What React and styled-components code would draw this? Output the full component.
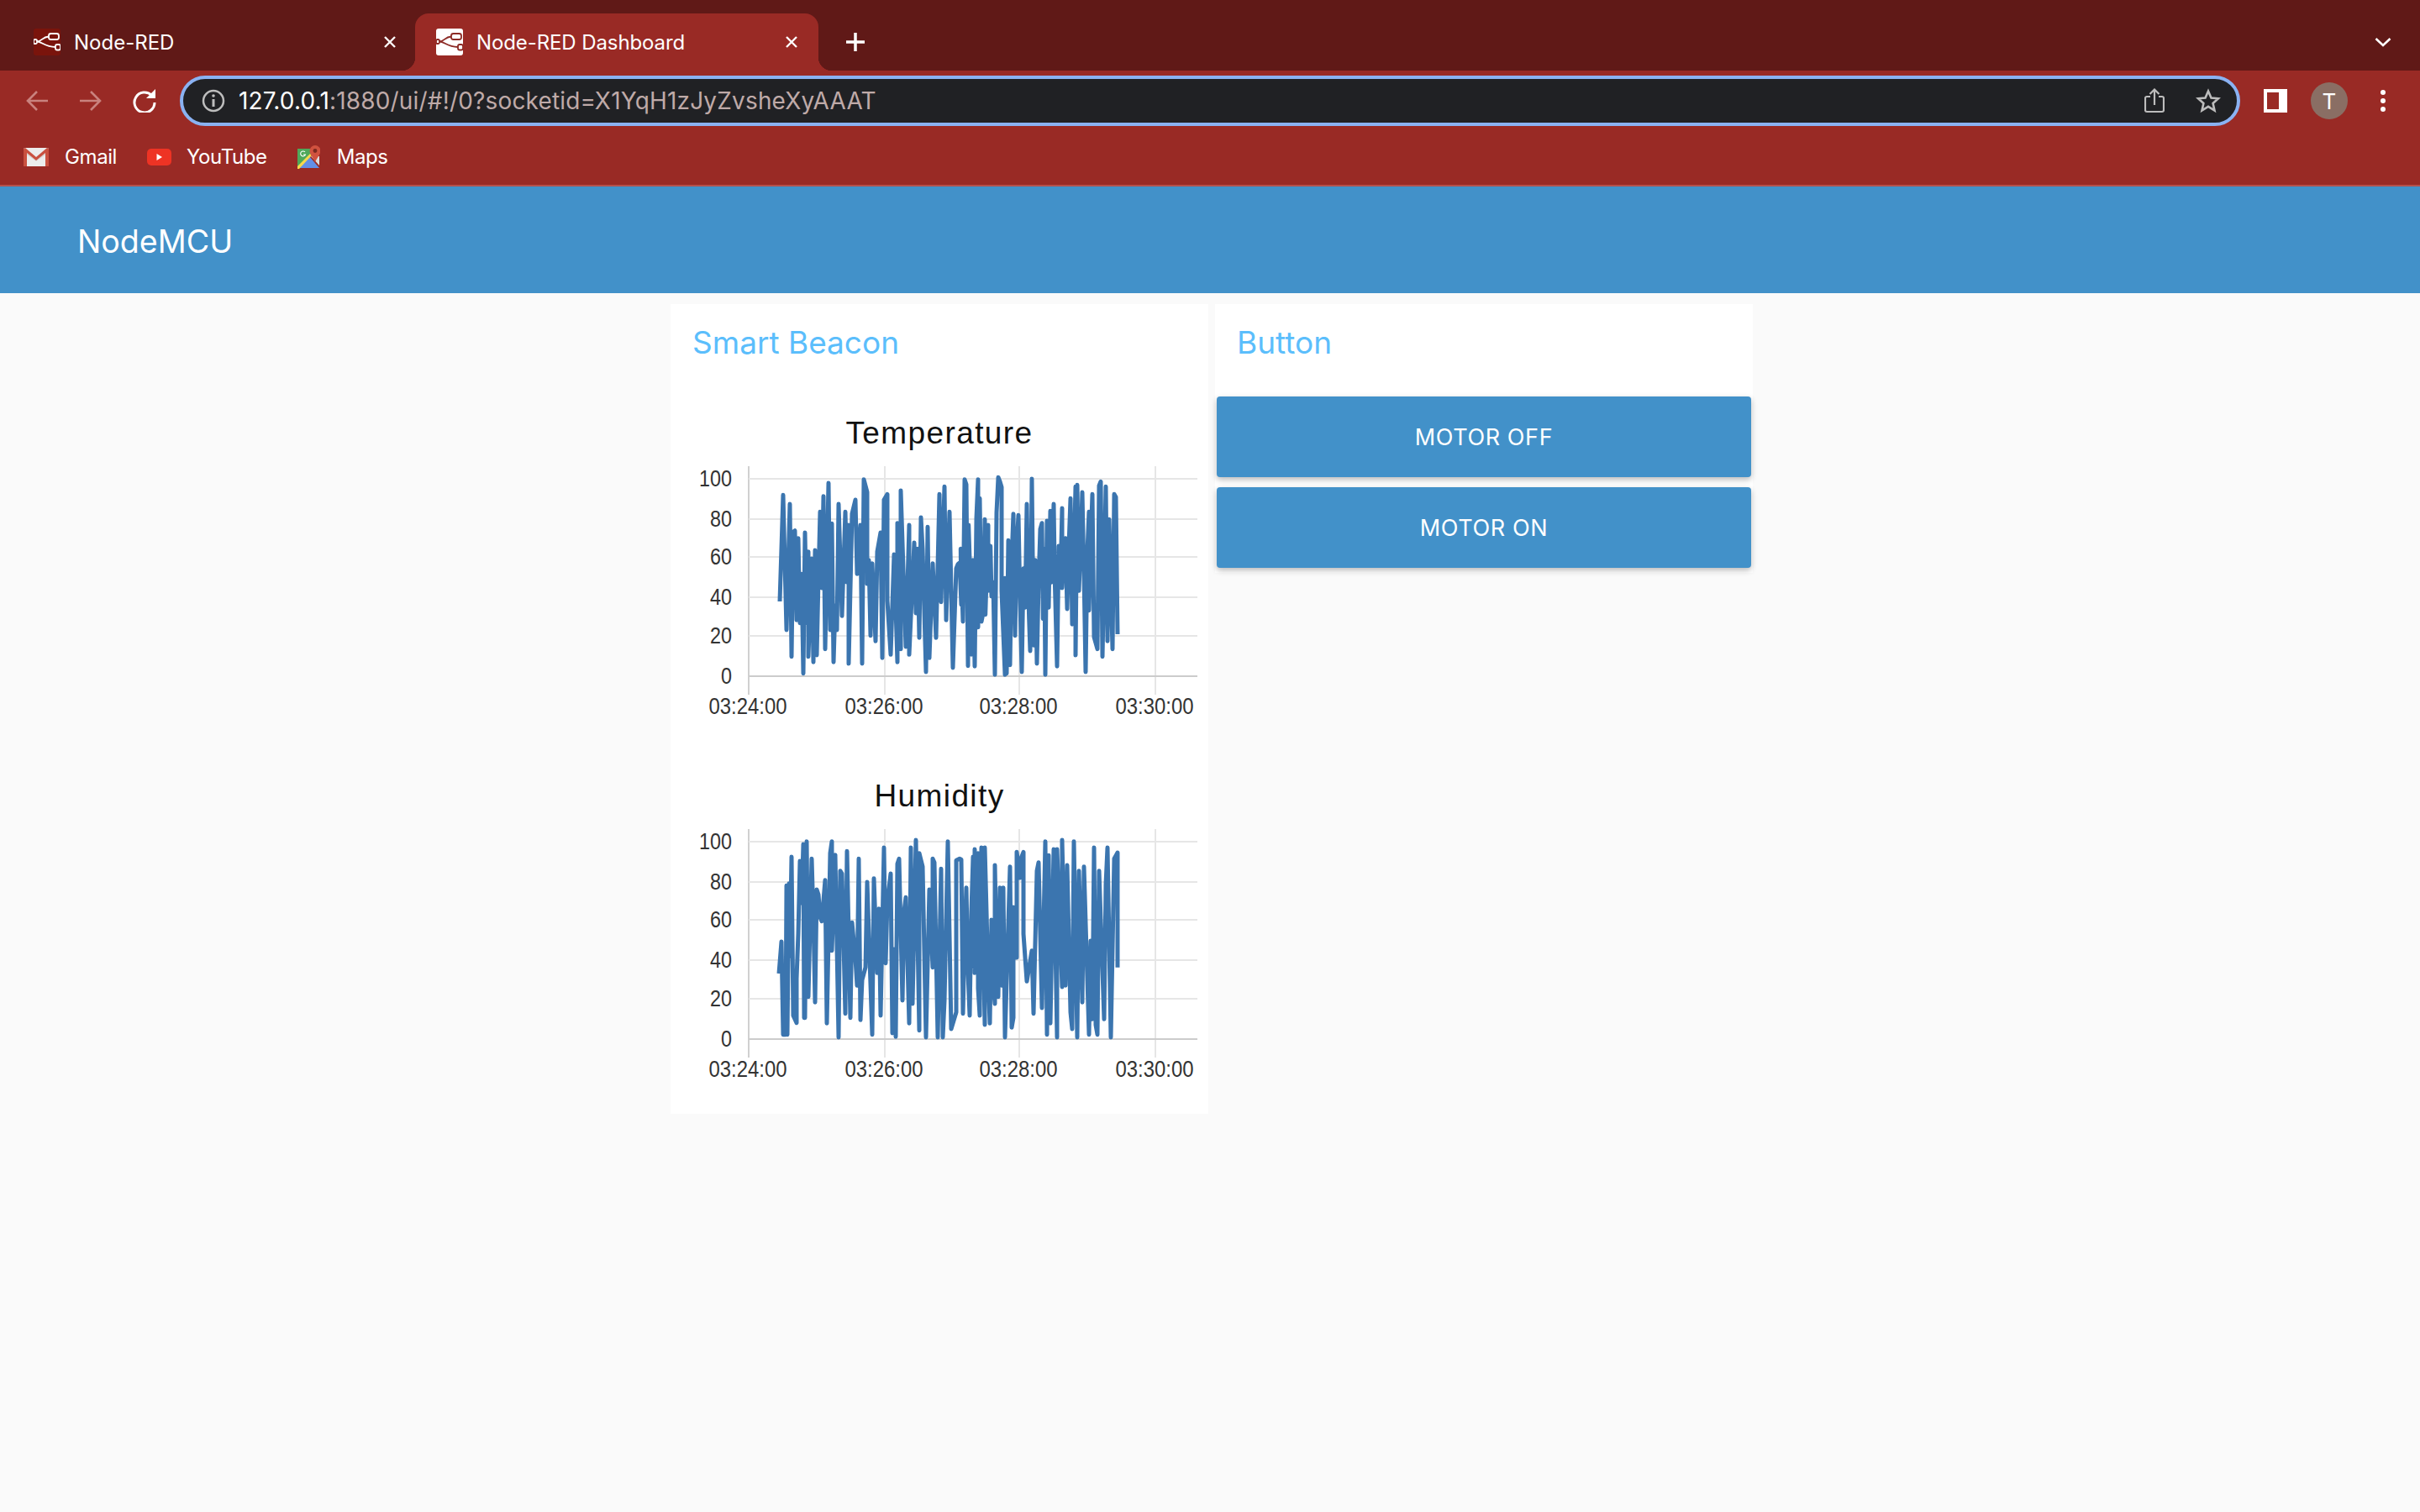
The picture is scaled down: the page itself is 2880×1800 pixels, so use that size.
import React from 'react'
import styled, { createGlobalStyle } from 'styled-components'

const GlobalStyle = createGlobalStyle`
  html, body {
    margin: 0;
    padding: 0;
    background: #fafafa;
  }
  * {
    box-sizing: border-box;
  }
`

const Page = styled.div`
  width: 2880px;
  height: 1800px;
  display: flex;
  flex-direction: column;
  background: #fafafa;
  overflow: hidden;
`

/* browser chrome */
const TabStrip = styled.div`
  height: 84px;
  flex: none;
  padding: 16px 34px 0 14px;
  display: flex;
  align-items: stretch;
  background: #601917;
`
const Tab = styled.div`
  position: relative;
  width: 480px;
  padding: 0 ${p => (p.$active ? 20 : 18)}px 0 ${p => (p.$active ? 25 : 26)}px;
  display: flex;
  align-items: center;
  border-radius: 16px 16px 0 0;
  background: ${p => (p.$active ? '#992a25' : 'transparent')};
  ${p => p.$active && `
    &::before, &::after {
      content: '';
      position: absolute;
      bottom: 0;
      width: 16px;
      height: 16px;
    }
    &::before {
      left: -16px;
      background: radial-gradient(circle at 0 0, transparent 16px, #992a25 16.5px);
    }
    &::after {
      right: -16px;
      background: radial-gradient(circle at 100% 0, transparent 16px, #992a25 16.5px);
    }
  `}
`
const TabTitle = styled.span`
  margin-left: 16px;
  font: 400 24px "Inter", sans-serif;
  letter-spacing: ${p => (p.$active ? '-0.1px' : '0')};
  color: #fff;
  white-space: nowrap;
`
const TabClose = styled.span`
  margin-left: auto;
  width: 24px;
  height: 24px;
  display: flex;
  align-items: center;
  justify-content: center;
`
const NewTab = styled.span`
  margin-left: 32px;
  width: 24px;
  display: flex;
  align-items: center;
  justify-content: center;
`
const TabMenu = styled.span`
  margin-left: auto;
  width: 20px;
  display: flex;
  align-items: center;
  justify-content: center;
`
const Toolbar = styled.div`
  height: 66px;
  flex: none;
  padding: 6px 0 0 12px;
  display: flex;
  align-items: flex-start;
  background: #992a25;
`
const NavButton = styled.span`
  width: 64px;
  height: 60px;
  flex: none;
  display: flex;
  align-items: center;
  justify-content: center;
`
const Omnibox = styled.div`
  width: 2452px;
  height: 60px;
  margin-left: 10px;
  padding: 0 19px 0 22px;
  display: flex;
  align-items: center;
  border: 4px solid #8ab2f2;
  border-radius: 30px;
  background: #202124;
`
const UrlText = styled.div`
  margin-left: 16px;
  font: 400 28px "Inter", sans-serif;
  letter-spacing: 0.17px;
  color: #bfaaa8;
  white-space: nowrap;
`
const UrlHost = styled.span`
  color: #fff;
`
const OmniIcons = styled.div`
  margin-left: auto;
  display: flex;
  align-items: center;
  gap: 37px;
`
const ToolbarRight = styled.div`
  height: 60px;
  margin-left: 28px;
  display: flex;
  align-items: center;
`
const PanelIcon = styled.span`
  width: 28px;
  height: 28px;
  padding: 4px 10px 4px 4px;
  background: #fff;
`
const PanelInner = styled.span`
  display: block;
  width: 100%;
  height: 100%;
  background: #992a25;
`
const Avatar = styled.span`
  width: 44px;
  height: 44px;
  margin-left: 28px;
  border-radius: 50%;
  display: flex;
  align-items: center;
  justify-content: center;
  background: #8a6e64;
  font: 400 26px "Inter", sans-serif;
  color: #fff;
`
const Dots = styled.span`
  margin-left: 39px;
  display: flex;
  flex-direction: column;
  gap: 4px;
`
const Dot = styled.span`
  width: 6px;
  height: 6px;
  border-radius: 50%;
  background: #fff;
`
const Bookmarks = styled.div`
  height: 72px;
  flex: none;
  padding: 3px 0 0 28px;
  display: flex;
  align-items: center;
  background: #992a25;
  border-bottom: 2px solid #b5504c;
`
const Bookmark = styled.div`
  display: flex;
  align-items: center;
  gap: ${p => p.$gap}px;
  margin-right: ${p => p.$after}px;
  font: 400 24px "Inter", sans-serif;
  letter-spacing: -0.4px;
  color: #fff;
`

/* dashboard */
const TitleBar = styled.header`
  height: 127px;
  flex: none;
  padding: 4px 0 0 92px;
  display: flex;
  align-items: center;
  background: #4291c9;
  font: 400 37.6px "Inter", sans-serif;
  color: #fff;
`
const Content = styled.main`
  padding: 13px 0 0 4px;
  display: flex;
  justify-content: center;
  align-items: flex-start;
  gap: 8px;
`
const Card = styled.section`
  width: 640px;
  background: #fff;
`
const CardHeader = styled.h2`
  height: 110px;
  margin: 0;
  padding: 25px 0 0 26px;
  font: 400 37px/42px "Inter", sans-serif;
  color: #5bbefc;
`
const ChartList = styled.div`
  padding: 2px 0 10px;
  display: flex;
  flex-direction: column;
  gap: 22px;
`
const ChartBlock = styled.div`
  height: 410px;
`
const ChartTitle = styled.h3`
  height: 80px;
  margin: 0;
  padding-top: 21px;
  text-align: center;
  font: 400 37px/42px "Liberation Sans", sans-serif;
  letter-spacing: 1.4px;
  color: #111;
`
const ChartSvg = styled.svg`
  display: block;
`
const TickText = styled.text`
  font: 400 28px "Liberation Sans", sans-serif;
  fill: #333;
`
const ButtonList = styled.div`
  padding: 0 2px 6px;
  display: flex;
  flex-direction: column;
  gap: 12px;
`
const MotorButton = styled.button`
  height: 96px;
  border: 0;
  border-radius: 4px;
  background: #4291c9;
  box-shadow: 0 3px 7px rgba(0, 0, 0, 0.28);
  font: 400 27px "Inter", sans-serif;
  letter-spacing: 0.6px;
  color: #fff;
`

/* line traces, read off the picture: [x, y] pairs at 3x from a crop origin */
const tempA = [84,498,96,118,108,600,120,150,126,695,132,250,138,245,144,565,150,272,156,575,162,400,168,755,174,252,180,575,186,320,186,695,198,345,204,715,210,315,216,690,222,420,228,178,234,450,240,122,246,668,258,75,264,600,270,220,276,715,282,512,288,600,294,150,306,550,318,178,324,430,330,225,330,720,342,185,354,135,360,400,372,225,378,720,384,62,396,108,396,435,402,350,408,620,414,362,426,640,432,320,444,252,450,700,456,135,468,115,468,495,480,688,492,330,504,715,504,218,516,668,516,102,534,660,546,225,546,688,564,288,570,540,576,310,582,628,588,198,594,312,606,750,612,232,618,700,630,362,642,628,654,115,660,500,672,88,678,565,690,178,702,735,714,380]
const tempB = [30,365,36,360,42,510,40,310,48,570,54,62,60,80,66,728,68,225,72,350,78,688,84,350,90,730,96,200,102,62,102,590,108,130,114,570,120,540,126,205,128,545,138,225,138,460,146,300,150,480,156,430,162,760,168,180,174,55,180,70,186,90,186,460,198,760,198,415,204,755,210,280,216,725,222,350,228,185,234,620,240,300,246,190,252,500,258,750,264,380,270,520,276,150,280,400,284,560,288,675,292,300,294,60,298,420,300,655,306,350,312,720,318,430,324,240,330,218,334,560,338,310,342,760,348,210,354,520,360,175,364,430,372,150,376,420,384,730,390,300,396,430,402,165,402,450,408,300,414,272,420,525,426,300,432,130,438,580,444,340,450,88,450,690,456,82,462,460,468,300,474,108,480,400,486,750,492,320,498,178,498,530,504,300,510,115,516,625,528,668,534,85,540,70,546,695,558,88,564,640,570,205,582,668,588,115,594,125,600,615]
const humA = [36,522,45,408,51,740,60,740,63,208,66,740,72,200,75,460,81,105,87,672,99,698,99,540,105,380,111,120,117,270,123,60,126,680,129,680,135,50,141,605,153,112,159,320,165,625,171,222,177,240,183,320,189,335,201,188,207,700,219,92,225,50,225,440,237,98,249,750,255,155,261,165,273,665,279,85,291,680,297,340,309,470,315,565,321,112,327,688,333,545,345,500,351,195,360,470,369,740,375,182,387,520,393,290,399,672,411,72,417,485,423,265,435,165,441,735,447,435,453,748,459,130,465,112,477,618,483,298,489,250,501,700,507,72,513,630,525,45,537,725,537,92,549,140,561,750,573,222,585,500,585,112,591,125,603,750,615,148,621,750,627,620,639,50,651,720]
const humB = [24,660,24,118,36,112,42,115,48,665,54,400,60,215,66,520,72,672,78,300,84,105,88,500,90,78,90,520,96,300,102,92,102,575,108,672,110,250,114,72,120,400,126,705,126,72,132,300,138,540,144,700,150,330,156,560,162,630,162,135,168,450,174,605,180,215,186,565,192,215,198,750,216,140,222,715,228,680,228,285,240,465,240,88,252,180,252,120,264,88,264,380,276,550,294,440,300,665,312,155,318,125,330,645,342,50,348,740,354,100,360,700,372,78,384,750,384,78,402,570,402,45,414,565,420,135,432,660,438,720,444,50,456,750,462,155,474,625,480,140,498,740,504,405,510,685,516,72,522,705,528,740,534,155,552,685,558,205,564,72,576,750,588,112,600,90,600,500]

function tracePoints(trace, ox, oy) {
  const out = []
  for (let i = 0; i < trace.length; i += 2) {
    out.push(`${(ox + trace[i] / 3 - 798).toFixed(1)},${(oy + trace[i + 1] / 3).toFixed(1)}`)
  }
  return out
}

const yTicks = [
  { y: 16, label: '100', w: 39 },
  { y: 64, label: '80', w: 26 },
  { y: 109, label: '60', w: 26 },
  { y: 157, label: '40', w: 26 },
  { y: 203, label: '20', w: 26 },
  { y: 251, label: '0', w: 13 },
]
const xTicks = [
  { x: 92, label: '03:24:00' },
  { x: 254, label: '03:26:00' },
  { x: 414, label: '03:28:00' },
  { x: 576, label: '03:30:00' },
]
const gridX = [93, 255, 415, 577]

function LineChart({ points }) {
  return (
    <ChartSvg width="640" height="330" viewBox="0 0 640 330">
      {gridX.map((x, i) => (
        <line key={x} x1={x} x2={x} y1="1" y2="273" stroke={i === 0 ? '#d0d0d0' : '#e6e6e6'} strokeWidth="2" />
      ))}
      {yTicks.map(t => (
        <line key={t.y} x1="93" x2="627" y1={t.y} y2={t.y} stroke={t.y === 251 ? '#cccccc' : '#e6e6e6'} strokeWidth="2" />
      ))}
      <polyline points={points.join(' ')} fill="none" stroke="#3b75af" strokeWidth="5" strokeLinejoin="round" strokeLinecap="butt" />
      {yTicks.map(t => (
        <TickText key={t.y} x="73" y={t.y - 1} textAnchor="end" dominantBaseline="central" textLength={t.w} lengthAdjust="spacingAndGlyphs">{t.label}</TickText>
      ))}
      {xTicks.map(t => (
        <TickText key={t.x} x={t.x} y="286" textAnchor="middle" dominantBaseline="central" textLength="93" lengthAdjust="spacingAndGlyphs">{t.label}</TickText>
      ))}
    </ChartSvg>
  )
}

function NodeRedIcon({ dark }) {
  const bg = dark ? '#7a140c' : '#fff'
  const fg = dark ? '#fff' : '#8c2a25'
  return (
    <svg width="32" height="32" viewBox="0 0 32 32">
      <rect width="32" height="32" rx="3" fill={bg} />
      <rect x="18" y="6" width="12" height="7" rx="2.5" fill="none" stroke={fg} strokeWidth="1.8" />
      <rect x="26" y="19" width="6" height="6.5" rx="2" fill="none" stroke={fg} strokeWidth="1.8" />
      <rect x="0" y="13" width="4" height="5" rx="1.5" fill="none" stroke={fg} strokeWidth="1.8" />
      <path d="M4 15.5c6 0 6-5.500 14-6M4 15.500c6 0 9 6.500 22 6.500" fill="none" stroke={fg} strokeWidth="1.8" />
    </svg>
  )
}

function CloseIcon() {
  return (
    <svg width="16" height="16" viewBox="0 0 16 16">
      <path d="M2 2l12 12M14 2L2 14" stroke="#fff" strokeWidth="2.400" fill="none" />
    </svg>
  )
}

function GmailIcon() {
  return (
    <svg width="30" height="22" viewBox="0 0 30 22">
      <rect width="30" height="22" rx="2" fill="#ececec" />
      <path d="M1 1l14 11L29 1v5L15 16 1 6z" fill="#d9d3d0" />
      <path d="M0 2c0-1 1-2 2-2l13 11L28 0c1 0 2 1 2 2v20h-4V6L15 15 4 6v16H0z" fill="#c9503f" />
    </svg>
  )
}

function YoutubeIcon() {
  return (
    <svg width="29" height="20" viewBox="0 0 29 20">
      <rect width="29" height="20" rx="5" fill="#ee3324" />
      <path d="M11.500 6v8l6.500-4z" fill="#fff" />
    </svg>
  )
}

function MapsIcon() {
  return (
    <svg width="27" height="28" viewBox="0 0 27 28">
      <path d="M0 4h16v8L0 27z" fill="#4fa85a" />
      <path d="M0 27l14-14 12 14z" fill="#628fe8" />
      <path d="M0 25L15 10l2 2L2 28H0z" fill="#f6d94c" />
      <path d="M16 13l10 11V13z" fill="#dcdcdc" />
      <path d="M21 0a6.500 6.500 0 0 1 6.500 6.500C27.500 11 23 15 21 20c-2-5-6.500-9-6.500-13.500A6.500 6.500 0 0 1 21 0z" fill="#d0523f" />
      <circle cx="21" cy="6.500" r="2.400" fill="#7a2a20" />
      <path d="M9 8a3 3 0 1 0 .5 3H7" fill="none" stroke="#fff" strokeWidth="1.100" />
    </svg>
  )
}

function App() {
  const temperature = [...tracePoints(tempA, 900, -4), ...tracePoints(tempB, 1130, -4)]
  const humidity = [...tracePoints(humA, 915, -1), ...tracePoints(humB, 1130, -1)]

  return (
    <Page>
      <GlobalStyle />
      <TabStrip>
        <Tab>
          <NodeRedIcon dark />
          <TabTitle>Node-RED</TabTitle>
          <TabClose><CloseIcon /></TabClose>
        </Tab>
        <Tab $active>
          <NodeRedIcon />
          <TabTitle $active>Node-RED Dashboard</TabTitle>
          <TabClose><CloseIcon /></TabClose>
        </Tab>
        <NewTab>
          <svg width="24" height="24" viewBox="0 0 24 24">
            <path d="M12 1v22M1 12h22" stroke="#fff" strokeWidth="3.500" fill="none" />
          </svg>
        </NewTab>
        <TabMenu>
          <svg width="20" height="12" viewBox="0 0 20 12">
            <path d="M1.500 2L10 10l8.500-8" stroke="#fff" strokeWidth="2.600" fill="none" />
          </svg>
        </TabMenu>
      </TabStrip>

      <Toolbar>
        <NavButton>
          <svg width="28" height="26" viewBox="0 0 28 26">
            <path d="M27 13H3M14 2L3 13l11 11" stroke="#c9827e" strokeWidth="2.600" fill="none" />
          </svg>
        </NavButton>
        <NavButton>
          <svg width="28" height="26" viewBox="0 0 28 26">
            <path d="M1 13h24M14 2l11 11-11 11" stroke="#c9827e" strokeWidth="2.600" fill="none" />
          </svg>
        </NavButton>
        <NavButton>
          <svg width="28" height="28" viewBox="0 0 28 28">
            <path d="M22.500 7.500A12 12 0 1 0 26 16" stroke="#fff" strokeWidth="3" fill="none" />
            <path d="M27 0v11H16z" fill="#fff" />
          </svg>
        </NavButton>
        <Omnibox>
          <svg width="28" height="28" viewBox="0 0 28 28">
            <circle cx="14" cy="14" r="12" stroke="#bdbdbd" strokeWidth="2.500" fill="none" />
            <path d="M14 12v9" stroke="#bdbdbd" strokeWidth="3" />
            <circle cx="14" cy="8" r="1.800" fill="#bdbdbd" />
          </svg>
          <UrlText><UrlHost>127.0.0.1</UrlHost>:1880/ui/#!/0?socketid=X1YqH1zJyZvsheXyAAAT</UrlText>
          <OmniIcons>
            <svg width="24" height="30" viewBox="0 0 24 30">
              <path d="M7 10H3a2 2 0 0 0-2 2v14a2 2 0 0 0 2 2h18a2 2 0 0 0 2-2V12a2 2 0 0 0-2-2h-4" stroke="#bdbdbd" strokeWidth="2.200" fill="none" />
              <path d="M12 20V2M6.500 7L12 1.500 17.500 7" stroke="#bdbdbd" strokeWidth="2.200" fill="none" />
            </svg>
            <svg width="30" height="30" viewBox="0 0 30 30">
              <path d="M15 3.500l3.500 8 8.500.8-6.400 5.700 1.900 8.500L15 21.900l-7.500 4.600 1.900-8.500L3 12.300l8.500-.8z" stroke="#bdbdbd" strokeWidth="2.600" fill="none" />
            </svg>
          </OmniIcons>
        </Omnibox>
        <ToolbarRight>
          <PanelIcon><PanelInner /></PanelIcon>
          <Avatar>T</Avatar>
          <Dots><Dot /><Dot /><Dot /></Dots>
        </ToolbarRight>
      </Toolbar>

      <Bookmarks>
        <Bookmark $gap={19} $after={36}><GmailIcon />Gmail</Bookmark>
        <Bookmark $gap={18} $after={36}><YoutubeIcon />YouTube</Bookmark>
        <Bookmark $gap={20} $after={0}><MapsIcon />Maps</Bookmark>
      </Bookmarks>

      <TitleBar>NodeMCU</TitleBar>

      <Content>
        <Card>
          <CardHeader>Smart Beacon</CardHeader>
          <ChartList>
            <ChartBlock>
              <ChartTitle>Temperature</ChartTitle>
              <LineChart points={temperature} />
            </ChartBlock>
            <ChartBlock>
              <ChartTitle>Humidity</ChartTitle>
              <LineChart points={humidity} />
            </ChartBlock>
          </ChartList>
        </Card>
        <Card>
          <CardHeader>Button</CardHeader>
          <ButtonList>
            <MotorButton>MOTOR OFF</MotorButton>
            <MotorButton>MOTOR ON</MotorButton>
          </ButtonList>
        </Card>
      </Content>
    </Page>
  )
}

export default App
